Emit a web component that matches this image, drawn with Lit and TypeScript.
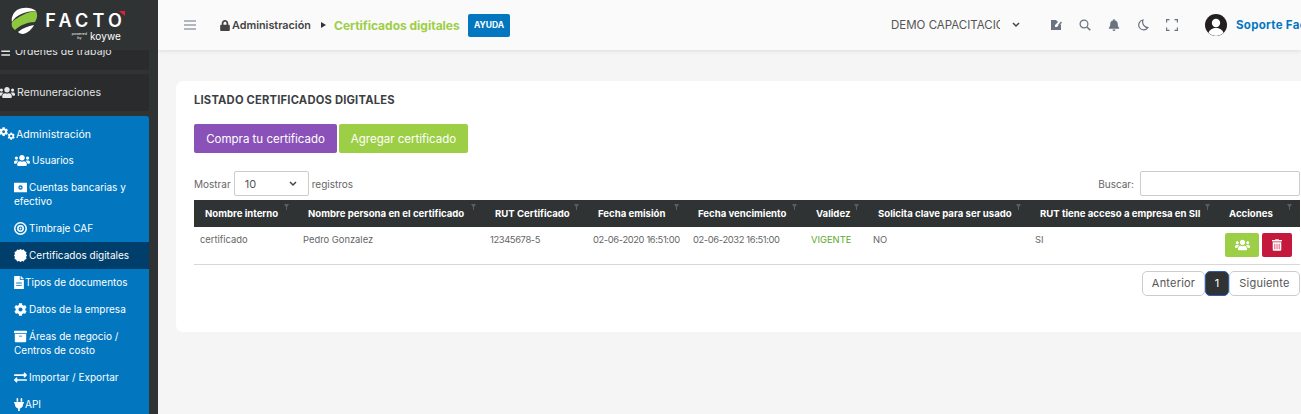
import { css, html, LitElement, svg } from 'lit';
import { customElement } from 'lit/decorators.js';

const USERS = svg`<path d="M96 224c35.3 0 64-28.7 64-64s-28.7-64-64-64-64 28.7-64 64 28.7 64 64 64zm448 0c35.3 0 64-28.7 64-64s-28.7-64-64-64-64 28.7-64 64 28.7 64 64 64zm32 32h-64c-17.6 0-33.5 7.1-45.1 18.6 40.3 22.1 68.9 62 75.1 109.4h66c17.7 0 32-14.3 32-32v-32c0-35.3-28.7-64-64-64zm-256 0c61.9 0 112-50.1 112-112S381.9 32 320 32 208 82.1 208 144s50.1 112 112 112zm76.8 32h-8.3c-20.8 10-43.9 16-68.5 16s-47.6-6-68.5-16h-8.3C179.6 288 128 339.6 128 403.2V432c0 26.5 21.5 48 48 48h288c26.5 0 48-21.5 48-48v-28.8c0-63.6-51.6-115.2-115.2-115.2zm-223.7-13.4C161.5 263.1 145.6 256 128 256H64c-35.3 0-64 28.7-64 64v32c0 17.7 14.3 32 32 32h65.9c6.3-47.4 34.9-87.3 75.2-109.4z"/>`;
const GEAR = 'M487.4 315.7l-42.6-24.6c4.3-23.2 4.3-47 0-70.2l42.6-24.6c4.9-2.8 7.1-8.6 5.5-14-11.1-35.6-30-67.8-54.7-94.6-3.8-4.1-10-5.1-14.8-2.3L380.8 110c-17.9-15.4-38.5-27.3-60.8-35.1V25.8c0-5.6-3.9-10.5-9.4-11.7-36.7-8.2-74.3-7.8-109.2 0-5.5 1.2-9.4 6.1-9.4 11.7V75c-22.2 7.9-42.8 19.8-60.8 35.1L88.7 85.5c-4.9-2.8-11-1.9-14.8 2.3-24.7 26.7-43.6 58.9-54.7 94.6-1.7 5.4.6 11.2 5.5 14L67.3 221c-4.3 23.2-4.3 47 0 70.2l-42.6 24.6c-4.9 2.8-7.1 8.6-5.5 14 11.1 35.6 30 67.8 54.7 94.6 3.8 4.1 10 5.1 14.8 2.3l42.6-24.6c17.9 15.4 38.5 27.3 60.8 35.1v49.2c0 5.6 3.9 10.5 9.4 11.7 36.7 8.2 74.3 7.8 109.2 0 5.5-1.2 9.4-6.1 9.4-11.7v-49.2c22.2-7.9 42.8-19.8 60.8-35.1l42.6 24.6c4.9 2.8 11 1.9 14.8-2.3 24.7-26.7 43.6-58.9 54.7-94.6 1.5-5.5-.7-11.3-5.6-14.1zM256 336c-44.1 0-80-35.9-80-80s35.9-80 80-80 80 35.9 80 80-35.9 80-80 80z';

const icons = {
  users: html`<svg class="ico wide" viewBox="0 0 640 512">${USERS}</svg>`,
  cogs: html`<svg class="ico cogs" viewBox="0 0 640 512"><g transform="scale(.72)"><path d=${GEAR}/></g><g transform="translate(340 215) scale(.58)"><path d=${GEAR}/></g></svg>`,
  list: html`<svg class="ico list" viewBox="0 0 512 512"><path d="M0 90h90v70H0zM0 340h90v70H0zM170 80h342v60H170zM170 220h342v60H170zM170 360h342v60H170z"/></svg>`,
  money: html`<svg class="ico" viewBox="0 0 512 512"><path fill-rule="evenodd" d="M20 70h472a20 20 0 0 1 20 20v332a20 20 0 0 1-20 20H20a20 20 0 0 1-20-20V90a20 20 0 0 1 20-20zM256 170a86 86 0 1 0 0 172 86 86 0 0 0 0-172z"/><circle cx="256" cy="256" r="34"/></svg>`,
  bullseye: html`<svg class="ico" viewBox="0 0 512 512"><path fill-rule="evenodd" d="M256 0a256 256 0 1 0 0 512 256 256 0 0 0 0-512zm0 60a196 196 0 1 1 0 392 196 196 0 0 1 0-392zm0 60a136 136 0 1 0 0 272 136 136 0 0 0 0-272zm0 60a76 76 0 1 1 0 152 76 76 0 0 1 0-152z"/><circle cx="256" cy="256" r="36"/></svg>`,
  cert: html`<svg class="ico" viewBox="0 0 512 512"><path d="M256 0l62 42 72-20 32 68 72 32-20 72 38 62-38 62 20 72-72 32-32 68-72-20-62 42-62-42-72 20-32-68-72-32 20-72L0 256l38-62-20-72 72-32 32-68 72 20z"/></svg>`,
  file: html`<svg class="ico tall" viewBox="0 0 384 512"><path fill-rule="evenodd" d="M224 136V0H24C10.700 0 0 10.700 0 24v464c0 13.300 10.700 24 24 24h336c13.300 0 24-10.700 24-24V160H248c-13.200 0-24-10.800-24-24zM80 260h224v36H80zm0 90h224v36H80z"/><path d="M384 121.900v6.100H256V0h6.100c6.400 0 12.500 2.500 17 7l97.900 98c4.500 4.500 7 10.600 7 16.900z"/></svg>`,
  gear: html`<svg class="ico" viewBox="0 0 512 512"><path d=${GEAR}/></svg>`,
  archive: html`<svg class="ico" viewBox="0 0 512 512"><path fill-rule="evenodd" d="M32 448c0 17.700 14.300 32 32 32h384c17.700 0 32-14.300 32-32V160H32zm160-212c0-6.600 5.400-12 12-12h104c6.600 0 12 5.400 12 12v8c0 6.600-5.400 12-12 12H204c-6.600 0-12-5.400-12-12z"/><path d="M480 32H32C14.300 32 0 46.300 0 64v48c0 8.800 7.200 16 16 16h480c8.800 0 16-7.200 16-16V64c0-17.700-14.300-32-32-32z"/></svg>`,
  exchange: html`<svg class="ico" viewBox="0 0 512 512"><path d="M0 168v-16c0-13.300 10.700-24 24-24h360V80c0-21.400 25.900-32 41-17l80 80c9.400 9.400 9.400 24.600 0 34l-80 80c-15 15-41 4.500-41-17v-48H24c-13.300 0-24-10.700-24-24zm488 152H128v-48c0-21.300-25.900-32-41-17l-80 80c-9.400 9.400-9.400 24.600 0 34l80 80c15.100 15.100 41 4.400 41-17v-48h360c13.300 0 24-10.700 24-24v-16c0-13.300-10.700-24-24-24z"/></svg>`,
  plug: html`<svg class="ico tall" viewBox="0 0 384 512"><path d="M256 144V32c0-17.700 14.300-32 32-32s32 14.300 32 32v112zM96 144V32c0-17.700 14.300-32 32-32s32 14.300 32 32v112zM368 160H16c-8.800 0-16 7.200-16 16v32c0 8.800 7.200 16 16 16h16v32c0 77.400 55 142 128 156.800V512h64v-99.200C297 398 352 333.400 352 256v-32h16c8.800 0 16-7.200 16-16v-32c0-8.800-7.200-16-16-16z"/></svg>`,
};

const menu = [
  { icon: icons.users, lines: ['Usuarios'] },
  { icon: icons.money, lines: ['Cuentas bancarias y', 'efectivo'] },
  { icon: icons.bullseye, lines: ['Timbraje CAF'] },
  { icon: icons.cert, lines: ['Certificados digitales'], active: true },
  { icon: icons.file, lines: ['Tipos de documentos'] },
  { icon: icons.gear, lines: ['Datos de la empresa'] },
  { icon: icons.archive, lines: ['Áreas de negocio /', 'Centros de costo'] },
  { icon: icons.exchange, lines: ['Importar / Exportar'] },
  { icon: icons.plug, lines: ['API'] },
];

const columns = [
  'Nombre interno',
  'Nombre persona en el certificado',
  'RUT Certificado',
  'Fecha emisión',
  'Fecha vencimiento',
  'Validez',
  'Solicita clave para ser usado',
  'RUT tiene acceso a empresa en SII',
  'Acciones',
];

@customElement('app-root')
export class AppRoot extends LitElement {
  static override styles = css`
    :host {
      display: block;
      height: 414px;
      overflow: hidden;
      font-family: Inter, 'Liberation Sans', sans-serif;
      font-size: 10px;
      color: #555;
      background: #f5f5f5;
    }

    .app {
      display: flex;
      height: 414px;
      overflow: hidden;
    }

    /* sidebar */
    .sidebar {
      flex: 0 0 158px;
      display: flex;
      flex-direction: column;
      background: #303334;
      overflow: hidden;
    }

    .logo {
      flex: 0 0 50px;
      display: flex;
      position: relative;
      background: #303334;
      color: #fff;
    }

    .swoosh {
      width: 27px;
      height: 27px;
      margin: 7px 0 0 11px;
    }

    .brand {
      display: flex;
      flex-direction: column;
      align-items: flex-end;
      width: 76px;
      margin-left: 8px;
      padding-top: 11px;
    }

    .brand b {
      font-size: 18px;
      line-height: 20px;
      font-weight: 600;
      letter-spacing: 4.2px;
      margin-right: -4px;
    }

    .brand small {
      display: flex;
      align-items: center;
      gap: 3px;
      font-size: 10px;
      line-height: 11px;
      letter-spacing: 0.1px;
      margin-right: 1px;
    }

    .brand small i {
      font-size: 3.5px;
      line-height: 3.5px;
      font-style: normal;
      text-align: center;
    }

    .tick {
      position: absolute;
      left: 119px;
      top: 11px;
      width: 6px;
      height: 5px;
      background: #e01f3d;
      clip-path: polygon(0 0, 100% 0, 100% 100%);
    }

    .menu {
      flex: 1;
      width: 149px;
      overflow: hidden;
      color: #fff;
      font-size: 10px;
      white-space: nowrap;
    }

    .group {
      display: flex;
      align-items: center;
      height: 37px;
      margin-bottom: 5px;
      background: #292b2c;
      border-radius: 0 3px 3px 0;
      color: #e6e6e6;
      font-size: 10.5px;
      letter-spacing: 0.08px;
    }

    .group.first {
      height: 38px;
      margin-top: -18px;
      margin-bottom: 4px;
    }

    .blue {
      background: #0277c0;
      border-radius: 0 3px 0 0;
      padding-top: 5px;
    }

    .row {
      height: 14px;
      padding: 6px 0 7px 14px;
      line-height: 14px;
    }

    .row.two {
      height: 28px;
    }

    .row.head {
      padding-left: 0;
      padding-bottom: 6px;
      font-size: 10.5px;
      letter-spacing: 0.08px;
    }

    .row.active {
      background: #003f6b;
    }

    .ico {
      width: 13px;
      height: 13px;
      fill: currentColor;
      vertical-align: -2.5px;
      margin-right: 2px;
    }

    .ico.wide {
      width: 16px;
      height: 13px;
    }

    .ico.tall {
      width: 10px;
      height: 13px;
      margin-right: 1px;
    }

    .ico.cogs {
      width: 16px;
      height: 13px;
      margin-left: -1px;
      margin-right: 1px;
    }

    .group .ico {
      flex: none;
      margin-left: -1px;
      margin-right: 2px;
    }

    .group .ico.list {
      margin-left: -3px;
      margin-right: 5px;
    }

    /* main */
    .main {
      flex: 0 0 1143px;
      display: flex;
      flex-direction: column;
      min-width: 0;
    }

    .topbar {
      flex: 0 0 50px;
      display: flex;
      align-items: center;
      background: #fafafa;
      box-shadow: 0 1px 4px rgba(0, 0, 0, 0.1);
      white-space: nowrap;
      overflow: hidden;
    }

    .topbar > * {
      flex: none;
    }

    .burger {
      width: 12px;
      height: 10px;
      margin: 0 24px 0 26px;
      stroke: #6b7280;
    }

    .lock {
      width: 10px;
      height: 11px;
      fill: #444;
      margin-right: 2px;
    }

    .crumb {
      font-size: 10.8px;
      font-weight: 600;
      color: #444;
      width: 79px;
    }

    .sep {
      width: 0;
      height: 0;
      border: 3.5px solid transparent;
      border-left: 5px solid #333;
      border-right: 0;
      margin: 0 8px 0 10px;
    }

    .current {
      font-size: 12px;
      font-weight: 700;
      color: #9ccf45;
      width: 134px;
    }

    .help {
      width: 42px;
      height: 23px;
      display: flex;
      align-items: center;
      justify-content: center;
      background: #0277c0;
      color: #fff;
      border-radius: 2px;
      font-size: 8.5px;
      font-weight: 700;
    }

    .company {
      width: 109px;
      margin-left: 381px;
      overflow: hidden;
      font-size: 11.5px;
      color: #555;
    }

    .chev {
      width: 8px;
      height: 6px;
      margin: 0 30px 0 12px;
      fill: none;
      stroke: #444;
      stroke-width: 1.5;
    }

    .tools {
      display: flex;
      gap: 17px;
      color: #6b7280;
    }

    .tools svg {
      width: 12px;
      height: 12px;
      display: block;
      fill: currentColor;
    }

    .tools svg.line {
      fill: none;
      stroke: currentColor;
      stroke-width: 1.2;
    }

    .avatar {
      width: 22px;
      height: 22px;
      margin: 0 9px 0 27px;
    }

    .user {
      font-size: 11.5px;
      font-weight: 700;
      color: #0277c0;
      letter-spacing: 0.3px;
    }

    .content {
      padding: 31px 0 0 18px;
    }

    .card {
      box-sizing: border-box;
      width: 1142px;
      height: 251px;
      padding: 12px 18px;
      background: #fff;
      border-radius: 7px;
    }

    h2 {
      margin: 0;
      font-size: 11.2px;
      line-height: 14px;
      font-weight: 700;
      color: #3b3f44;
      letter-spacing: 0.2px;
    }

    .actions {
      display: flex;
      gap: 2px;
      margin-top: 17px;
    }

    .btn {
      height: 29px;
      display: flex;
      align-items: center;
      justify-content: center;
      color: #fff;
      border-radius: 2px;
      font-size: 11.5px;
    }

    .purple {
      width: 143px;
      background: #8a52b8;
    }

    .green {
      width: 129px;
      background: #9ccf45;
    }

    .filters {
      display: flex;
      align-items: center;
      height: 25px;
      margin-top: 18px;
      font-size: 10px;
      color: #666;
    }

    .select {
      box-sizing: border-box;
      width: 75px;
      height: 25px;
      margin: 0 3px;
      padding: 0 11px 0 10px;
      display: flex;
      align-items: center;
      justify-content: space-between;
      border: 1px solid #ccc;
      border-radius: 2px;
      font-size: 11px;
      color: #555;
    }

    .select svg {
      width: 8px;
      height: 6px;
      fill: none;
      stroke: #444;
      stroke-width: 1.5;
    }

    .search {
      margin-left: auto;
      display: flex;
      align-items: center;
      gap: 6px;
    }

    .search span {
      width: 160px;
      height: 25px;
      box-sizing: border-box;
      border: 1px solid #ccc;
      border-radius: 2px;
    }

    table {
      box-sizing: border-box;
      width: 1106px;
      margin-top: 4px;
      table-layout: fixed;
      border-collapse: collapse;
    }

    th {
      position: relative;
      box-sizing: border-box;
      height: 27px;
      padding: 0 0 0 11px;
      background: #303334;
      color: #fff;
      font-size: 9.6px;
      font-weight: 700;
      text-align: left;
      white-space: nowrap;
      overflow: hidden;
    }

    th::after {
      content: '';
      position: absolute;
      top: 4px;
      right: 8px;
      width: 5px;
      height: 6px;
      background: #5a5e60;
      clip-path: polygon(0 0, 100% 0, 60% 55%, 60% 100%, 40% 100%, 40% 55%);
    }

    td {
      box-sizing: border-box;
      height: 37px;
      padding: 7px 6px 0;
      vertical-align: top;
      border-bottom: 1px solid #d8d8d8;
      font-size: 9.4px;
      line-height: 12px;
      color: #666;
      white-space: nowrap;
    }

    td.num {
      letter-spacing: -0.38px;
    }

    td.ok {
      color: #5da82a;
    }

    td.buttons {
      padding: 6px 7px 0;
    }

    .row-actions {
      display: flex;
      gap: 3px;
    }

    .row-actions span {
      flex: none;
      height: 24px;
      display: flex;
      align-items: center;
      justify-content: center;
      border-radius: 2px;
      color: #fff;
    }

    .row-actions svg {
      fill: currentColor;
    }

    .pick {
      width: 34px;
      background: #9ccf45;
    }

    .pick svg {
      width: 15px;
      height: 12px;
    }

    .drop {
      width: 30px;
      background: #c4193d;
    }

    .drop svg {
      width: 10px;
      height: 12px;
    }

    .pager {
      display: flex;
      justify-content: flex-end;
      margin-top: 6px;
      font-size: 11px;
      color: #555;
    }

    .pager span {
      box-sizing: border-box;
      height: 25px;
      display: flex;
      align-items: center;
      justify-content: center;
      border: 1px solid #ccc;
      border-radius: 5px;
      letter-spacing: 0.2px;
    }

    .prev {
      width: 63px;
    }

    .next {
      width: 71px;
    }

    .pager .now {
      width: 24px;
      background: #303334;
      border-color: #2a5bc0;
      color: #fff;
    }
  `;

  override render() {
    return html`
      <div class="app">
        <aside class="sidebar">
          <div class="logo">
            <svg class="swoosh" viewBox="0 0 27 27">
              <path fill="#fff" d="M25 4C20 0 12 0 6 3 2 6 0 11 1 15 5 8 14 4 25 4z"/>
              <path fill="#8dc63f" d="M25 4c2 4 1 8-1 11-7 0-15 3-20 8-3-2-4-5-3-8C8 9 16 5 25 4z"/>
              <path fill="#fff" d="M23 18c-2 4-6 8-11 9-2 0-4-1-5-2 5-4 10-6 16-7z"/>
            </svg>
            <div class="brand">
              <b>FACTO</b>
              <small><i>powered<br />by</i>koywe</small>
            </div>
            <span class="tick"></span>
          </div>
          <nav class="menu">
            <div class="group first">${icons.list}Órdenes de trabajo</div>
            <div class="group">${icons.users}Remuneraciones</div>
            <div class="blue">
              <div class="row head">${icons.cogs}Administración</div>
              ${menu.map(
                (m) => html`<div class="row ${m.active ? 'active' : ''} ${m.lines[1] ? 'two' : ''}">
                  ${m.icon}${m.lines[0]}${m.lines[1] ? html`<br />${m.lines[1]}` : ''}
                </div>`
              )}
            </div>
          </nav>
        </aside>
        <div class="main">
          <header class="topbar">
            <svg class="burger" viewBox="0 0 12 10"><path d="M0 1h12M0 5h12M0 9h12"/></svg>
            <svg class="lock" viewBox="0 0 448 512"><path d="M400 224h-24v-72C376 68.200 307.800 0 224 0S72 68.200 72 152v72H48c-26.500 0-48 21.500-48 48v192c0 26.500 21.500 48 48 48h352c26.500 0 48-21.500 48-48V272c0-26.500-21.500-48-48-48zm-104 0H152v-72c0-39.700 32.300-72 72-72s72 32.300 72 72z"/></svg>
            <span class="crumb">Administración</span>
            <span class="sep"></span>
            <span class="current">Certificados digitales</span>
            <span class="help">AYUDA</span>
            <span class="company">DEMO CAPACITACIÓN</span>
            <svg class="chev" viewBox="0 0 8 6"><path d="M1 1l3 3 3-3"/></svg>
            <div class="tools">
              <svg viewBox="0 0 12 12"><path d="M1 1h5l2 2-3 3 0 2 2 0 3-3 1 1v5H1z"/><path d="M8 6l3-3.500 1 1L9 7z"/></svg>
              <svg class="line" viewBox="0 0 12 12"><circle cx="5" cy="5" r="3.900"/><path d="M8 8l3.300 3.300" stroke-width="1.600"/></svg>
              <svg viewBox="0 0 448 512"><path d="M224 512c35.300 0 64-28.700 64-64H160c0 35.300 28.700 64 64 64zm215.400-149.700c-19.300-20.800-55.500-52-55.500-154.300 0-77.700-54.500-139.900-127.900-155.200V32c0-17.700-14.300-32-32-32s-32 14.300-32 32v20.800C118.600 68.100 64.100 130.300 64.100 208c0 102.300-36.200 133.500-55.500 154.300-6 6.400-8.700 14.100-8.600 21.700.1 16.400 13 32 32.100 32h383.800c19.100 0 32-15.600 32.100-32 .1-7.600-2.600-15.300-8.600-21.700z"/></svg>
              <svg class="line" viewBox="0 0 12 12"><path d="M6 1A5 5 0 1 0 11 8.500 5.500 5.500 0 0 1 6 1z"/></svg>
              <svg class="line" viewBox="0 0 12 12"><path d="M.6 3.500V.6h2.900M8.500.6h2.900v2.900M.6 8.500v2.900h2.900M11.400 8.500v2.900H8.500"/></svg>
            </div>
            <svg class="avatar" viewBox="0 0 22 22">
              <circle cx="11" cy="11" r="11" fill="#231f20"/>
              <circle cx="11" cy="9" r="4.200" fill="#fff"/>
              <path fill="#fff" d="M3.500 19c1-3.500 4-5 7.500-5s6.500 1.500 7.500 5a11 11 0 0 1-15 0z"/>
            </svg>
            <span class="user">Soporte Facto</span>
          </header>
          <div class="content">
            <section class="card">
              <h2>LISTADO CERTIFICADOS DIGITALES</h2>
              <div class="actions">
                <span class="btn purple">Compra tu certificado</span>
                <span class="btn green">Agregar certificado</span>
              </div>
              <div class="filters">
                Mostrar
                <span class="select">10<svg viewBox="0 0 8 6"><path d="M1 1l3 3 3-3"/></svg></span>
                registros
                <div class="search">Buscar:<span></span></div>
              </div>
              <table>
                <colgroup>
                  <col style="width:103px" /><col style="width:187px" /><col style="width:103px" />
                  <col style="width:100px" /><col style="width:118px" /><col style="width:62px" />
                  <col style="width:162px" /><col style="width:189px" /><col style="width:82px" />
                </colgroup>
                <thead>
                  <tr>${columns.map((c) => html`<th>${c}</th>`)}</tr>
                </thead>
                <tbody>
                  <tr>
                    <td>certificado</td>
                    <td>Pedro Gonzalez</td>
                    <td class="num">12345678-5</td>
                    <td class="num">02-06-2020 16:51:00</td>
                    <td class="num">02-06-2032 16:51:00</td>
                    <td class="ok">VIGENTE</td>
                    <td>NO</td>
                    <td>SI</td>
                    <td class="buttons">
                      <div class="row-actions">
                        <span class="pick"><svg viewBox="0 0 640 512">${USERS}</svg></span>
                        <span class="drop">
                          <svg viewBox="0 0 448 512"><path d="M32 464a48 48 0 0 0 48 48h288a48 48 0 0 0 48-48V128H32zm272-256a16 16 0 0 1 32 0v224a16 16 0 0 1-32 0zm-96 0a16 16 0 0 1 32 0v224a16 16 0 0 1-32 0zm-96 0a16 16 0 0 1 32 0v224a16 16 0 0 1-32 0zM432 32H312l-9.400-18.700A24 24 0 0 0 281.100 0H166.800a23.720 23.720 0 0 0-21.400 13.300L136 32H16A16 16 0 0 0 0 48v32a16 16 0 0 0 16 16h416a16 16 0 0 0 16-16V48a16 16 0 0 0-16-16z"/></svg>
                        </span>
                      </div>
                    </td>
                  </tr>
                </tbody>
              </table>
              <div class="pager">
                <span class="prev">Anterior</span>
                <span class="now">1</span>
                <span class="next">Siguiente</span>
              </div>
            </section>
          </div>
        </div>
      </div>
    `;
  }
}

declare global {
  interface HTMLElementTagNameMap {
    'app-root': AppRoot;
  }
}
